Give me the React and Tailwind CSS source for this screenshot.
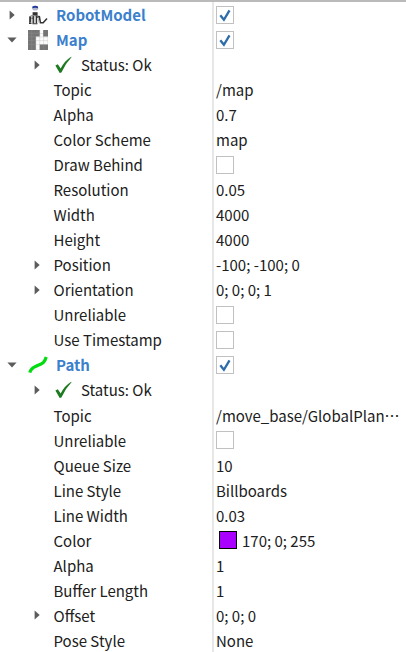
const rows = [
  { name: 'RobotModel', level: 0, arrow: 'right', icon: 'robot', checked: true },
  { name: 'Map', level: 0, arrow: 'down', icon: 'map', checked: true },
  { name: 'Status: Ok', level: 1, arrow: 'right', icon: 'ok' },
  { name: 'Topic', value: '/map' },
  { name: 'Alpha', value: '0.7' },
  { name: 'Color Scheme', value: 'map' },
  { name: 'Draw Behind', checked: false },
  { name: 'Resolution', value: '0.05' },
  { name: 'Width', value: '4000' },
  { name: 'Height', value: '4000' },
  { name: 'Position', arrow: 'right', value: '-100; -100; 0' },
  { name: 'Orientation', arrow: 'right', value: '0; 0; 0; 1' },
  { name: 'Unreliable', checked: false },
  { name: 'Use Timestamp', checked: false },
  { name: 'Path', level: 0, arrow: 'down', icon: 'path', checked: true },
  { name: 'Status: Ok', level: 1, arrow: 'right', icon: 'ok' },
  { name: 'Topic', value: '/move_base/GlobalPlan', elided: true },
  { name: 'Unreliable', checked: false },
  { name: 'Queue Size', value: '10' },
  { name: 'Line Style', value: 'Billboards' },
  { name: 'Line Width', value: '0.03' },
  { name: 'Color', value: '170; 0; 255', swatch: true },
  { name: 'Alpha', value: '1' },
  { name: 'Buffer Length', value: '1' },
  { name: 'Offset', arrow: 'right', value: '0; 0; 0' },
  { name: 'Pose Style', value: 'None' },
];

function Arrow({ dir }) {
  return (
    <svg className="h-[10px] w-[10px] shrink-0" viewBox="0 0 10 10" fill="#5c5c5c">
      {dir === 'right' && <path d="M2.6 .4 7.7 5 2.6 9.6z" />}
      {dir === 'down' && <path d="M.4 2.6h9.2L5 7.6z" />}
    </svg>
  );
}

function Icon({ type }) {
  if (type === 'robot')
    return (
      <svg className="h-5 w-5" viewBox="0 0 20 20" fill="none">
        <ellipse cx="7.2" cy="3.2" rx="3" ry="2.4" fill="#b4b8cf" />
        <path d="M4.4 1.6q2.8-1.6 5.6 0v1.6q-2.8-.8-5.6 0z" fill="#233b9c" />
        <path d="M1.6 18.3v-6.4l2-1.2h6l1.9 1.2v3" stroke="#777" strokeWidth="1.1" />
        <path d="M4.6 7.2h5v3h-5z" fill="#333" />
        <path d="M2.2 11.8v5.7M5.2 11v7.5M8.4 10.5v7.7M2 13.2h3M8.4 12.4l3-.8 1 6.1h2.8l3.8-4.3" stroke="#333" strokeWidth="1.5" />
        <path d="M3.8 11.5v6M6.8 11v7M10.2 13l.8 4.8" stroke="#bbb" />
        <path d="M1 18.4h2.5M4.5 18.7h5" stroke="#333" strokeWidth="1.1" />
      </svg>
    );
  if (type === 'map')
    return (
      <svg className="h-5 w-5" viewBox="0 0 20 20">
        <path d="M0 0h20v20H0z" fill="#fcfcfc" />
        <path d="M3.8 0v20M7.8 0v20M11.7 0v20M15.6 0v20M19.8 0v20M0 3.6h20M0 7h20M0 10.6h20M0 14.4h20M0 19.8h20" stroke="#ccc" strokeWidth=".5" />
        <path d="M0 0h11.7v6.4H7.8V20H0zM15.2 0H20v6.4h-4.8zM15.6 14.4H20V20h-8.3v-5.6z" fill="#757575" />
        <path d="M3.8 0v20M0 3.2h11.7M0 6.8h7.8M0 10.6h7.8M0 14.4h7.8M15.8 14.4V20" stroke="#8c8c8c" strokeWidth=".5" />
      </svg>
    );
  if (type === 'path')
    return (
      <svg className="h-5 w-5" viewBox="0 0 20 20">
        <path d="M1.8 17.6C3.6 11.2 7 12.2 10.2 10.2C15 8.6 16.8 7 18.2 2" fill="none" stroke="#00dc10" strokeWidth="3.2" />
      </svg>
    );
  return (
    <svg className="h-5 w-5" viewBox="0 0 20 20">
      <path d="M1.4 10.4 3.8 9.3 6.7 13.6Q10 6.3 17.2 1.8L17.5 2.2Q11.2 8.7 7.4 17.5L5.7 18z" fill="#1d7a20" />
    </svg>
  );
}

function Checkbox({ checked }) {
  return (
    <span className="flex h-[18px] w-[18px] items-center justify-center border border-[#c1c1c1] bg-white">
      {checked && (
        <svg className="h-4 w-4" viewBox="0 0 16 16">
          <path d="M3.3 8.2 6.9 12.8 12.5 3.4" fill="none" stroke="#2d6cab" strokeWidth="2.3" />
        </svg>
      )}
    </span>
  );
}

function Row({ row }) {
  const top = row.level === 0;
  return (
    <div className="flex h-[25.04px] items-center">
      <div className={'flex h-full w-[212px] shrink-0 items-center ' + (top ? 'pl-[7px]' : 'pl-8')}>
        <Arrow dir={row.arrow} />
        {row.icon && (
          <span className={top ? 'ml-[11px] w-5 shrink-0' : 'ml-[12px] w-5 shrink-0'}>
            <Icon type={row.icon} />
          </span>
        )}
        <span
          className={
            top
              ? 'ml-2 font-bold text-[#3b7fcd]'
              : row.icon
                ? 'ml-[7px] text-[#202020]'
                : 'ml-[11.5px] text-[#202020]'
          }
        >
          {row.name}
        </span>
      </div>
      <div className="flex h-full flex-1 items-center border-l-2 border-[#e7e7e7] pl-[2px]">
        {row.checked !== undefined && <Checkbox checked={row.checked} />}
        {row.swatch && <span className="mr-[5px] ml-[3px] h-[18px] w-[18px] border border-black bg-[#aa00ff]" />}
        <span className="text-[#202020]">{row.value}</span>
        {row.elided && <span className="text-[#202020]">…</span>}
      </div>
    </div>
  );
}

export default function App() {
  return (
    <div
      className="h-[652px] w-[406px] overflow-hidden border-t-2 border-[#bababa] bg-white text-[15px] leading-[25px] whitespace-pre"
      style={{ fontFamily: '"Noto Sans CJK SC", sans-serif' }}
    >
      {rows.map((row, i) => (
        <Row key={i} row={row} />
      ))}
    </div>
  );
}
